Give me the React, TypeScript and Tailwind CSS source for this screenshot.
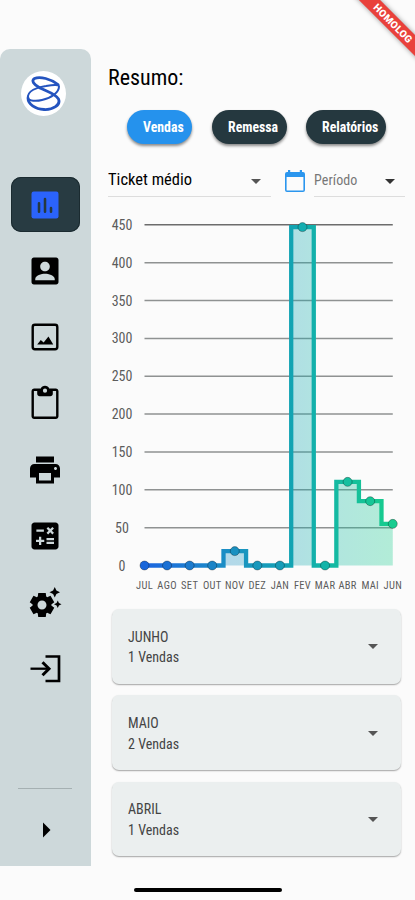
import { useState, type ReactNode } from "react";
import {
  MdArrowDropDown,
  MdArrowRight,
  MdCalculate,
  MdPrint,
  MdSettingsSuggest,
} from "react-icons/md";

const points = [
  { label: "JUL", value: 0 },
  { label: "AGO", value: 0 },
  { label: "SET", value: 0 },
  { label: "OUT", value: 0 },
  { label: "NOV", value: 19 },
  { label: "DEZ", value: 0 },
  { label: "JAN", value: 0 },
  { label: "FEV", value: 447 },
  { label: "MAR", value: 0 },
  { label: "ABR", value: 110.5 },
  { label: "MAI", value: 85 },
  { label: "JUN", value: 55 },
];

const pointColors = [
  "#1a66da", "#1b70d4", "#1b7acd", "#1b84c7", "#1a90c0", "#1998bc",
  "#179cb8", "#14adb0", "#14b3a8", "#15bf9f", "#16c697", "#18cc90",
];

const ticks = [450, 400, 350, 300, 250, 200, 150, 100, 50, 0];

const months = [
  { name: "JUNHO", sales: 1 },
  { name: "MAIO", sales: 2 },
  { name: "ABRIL", sales: 1 },
];

const STEP = 22.57;
const LEFT = 36.5;
const BASE = 355.5;

const toX = (index: number) => LEFT + index * STEP;
const toY = (value: number) => BASE - value * 0.757;

function buildStepPath() {
  let path = `M${toX(0)} ${toY(points[0].value)}`;

  points.slice(1).forEach(({ value }, index) => {
    path += `H${toX(index + 0.5)}V${toY(value)}`;
  });

  return `${path}H${toX(points.length - 1)}`;
}

function Chart() {
  const line = buildStepPath();

  return (
    <svg viewBox="0 0 307 390" className="block h-[390px] w-[307px]">
      <defs>
        <linearGradient
          id="sales"
          gradientUnits="userSpaceOnUse"
          x1={toX(0)}
          x2={toX(11)}
          y1="0"
          y2="0"
        >
          <stop offset="0" stopColor="#1c66e0" />
          <stop offset="0.36" stopColor="#1b92c2" />
          <stop offset="0.6" stopColor="#12a4b2" />
          <stop offset="0.7" stopColor="#13b3a9" />
          <stop offset="1" stopColor="#18cd8c" />
        </linearGradient>
      </defs>
      {ticks.map((tick) => (
        <g key={tick}>
          {tick > 0 && (
            <path
              d={`M${LEFT} ${toY(tick)}H${toX(11)}`}
              stroke={tick === 450 ? "#6c6c6c" : "#8f9292"}
              strokeWidth="1.5"
            />
          )}
          <text
            x="14"
            y={toY(tick) + 5}
            textAnchor="middle"
            fontSize="14"
            fill="#5c5c5c"
          >
            {tick}
          </text>
        </g>
      ))}
      <path
        d={`${line}V${BASE}H${LEFT}Z`}
        fill="url(#sales)"
        fillOpacity="0.32"
      />
      <path d={line} fill="none" stroke="url(#sales)" strokeWidth="4.3" />
      {points.map(({ label, value }, index) => (
        <g key={label}>
          <circle
            cx={toX(index)}
            cy={toY(value)}
            r="4.5"
            fill={pointColors[index]}
            stroke="#000"
            strokeOpacity="0.3"
          />
          <text
            x={toX(index)}
            y="379"
            textAnchor="middle"
            fontSize="10.5"
            letterSpacing="0.3"
            fill="#5c5c5c"
          >
            {label}
          </text>
        </g>
      ))}
    </svg>
  );
}

function Logo() {
  return (
    <div className="grid size-[45px] place-items-center rounded-full bg-white">
      <svg
        viewBox="0 0 36 36"
        className="size-9"
        fill="none"
        stroke="#2454bf"
        strokeLinecap="round"
        strokeLinejoin="round"
      >
        <path
          strokeWidth="2.8"
          d="M33 8.500C26 3 15 0 9.500 2.500C6 4.500 8.500 8.500 15 12C22 15.500 30 17.500 33.500 23C36 29 28 34 19 33.500C10 33 3 28 3 22"
        />
        <path
          strokeWidth="2"
          d="M3 22C2 15 12 11 21 10C27 9 34 8 34 10.500C34 16 27 22 17 24C11 25.500 4 25 3 22"
        />
      </svg>
    </div>
  );
}

function DashboardIcon() {
  return (
    <svg viewBox="0 0 24 24" className="size-9">
      <rect x="3" y="3" width="18" height="18" rx="1.5" fill="#2b63fb" />
      <path
        d="M8 10.800v5.700M12 8v8.500M16 14v2.500"
        stroke="#263940"
        strokeWidth="1.7"
        strokeLinecap="round"
      />
    </svg>
  );
}

function ProfileIcon() {
  return (
    <svg viewBox="0 0 24 24" className="size-9" fill="currentColor">
      <path
        fillRule="evenodd"
        d="M3 4.600v14.800C3 20.300 3.700 21 4.600 21h14.800c.9 0 1.600-.7 1.600-1.600V4.600c0-.9-.7-1.600-1.600-1.600H4.600C3.700 3 3 3.700 3 4.600zM15.200 9c0 1.800-1.400 3.200-3.200 3.200S8.800 10.800 8.800 9s1.400-3.200 3.200-3.200 3.200 1.400 3.200 3.200zM5.500 17.300c0-2.300 4.200-3.500 6.500-3.500s6.500 1.200 6.500 3.500v.9h-13z"
      />
    </svg>
  );
}

function PictureIcon() {
  return (
    <svg viewBox="0 0 24 24" className="size-9">
      <rect
        x="3.800"
        y="3.800"
        width="16.400"
        height="16.400"
        rx="1.500"
        fill="none"
        stroke="currentColor"
        strokeWidth="1.600"
      />
      <path
        d="M6.800 17l2.400-3 1.900 1.700 3.200-4 3.200 5.300z"
        fill="currentColor"
      />
    </svg>
  );
}

function ClipboardIcon() {
  return (
    <svg viewBox="0 0 24 24" className="size-9" fill="currentColor">
      <path
        fillRule="evenodd"
        d="M19.200 2.300h-4.400C14.400 1.200 13.300.5 12 .5s-2.400.7-2.800 1.800H4.800C3.800 2.300 3 3.100 3 4.100v16.700c0 1 .8 1.800 1.800 1.800h14.400c1 0 1.800-.8 1.800-1.800V4.100c0-1-.8-1.800-1.800-1.800zM12 2.400a1.400 1.400 0 1 1 0 2.800 1.400 1.400 0 0 1 0-2.800zM19.400 21H4.600V4h2.200v1.800c0 1 .7 1.700 1.700 1.700h7c1 0 1.700-.7 1.700-1.700V4h2.200z"
      />
    </svg>
  );
}

function ExitIcon() {
  return (
    <svg
      viewBox="0 0 36 36"
      className="size-9"
      fill="none"
      stroke="currentColor"
      strokeWidth="2.700"
    >
      <path d="M18.500 5.500h13.500v24.500H18.500" />
      <path d="M3.500 17.700h18" strokeWidth="2.300" />
      <path d="M15.500 11.200l6.500 6.500-6.500 6.500" strokeWidth="3" />
    </svg>
  );
}

function CalendarIcon() {
  return (
    <svg viewBox="0 0 20 23" className="h-[23px] w-5 shrink-0">
      <path
        fill="#2b96ee"
        fillRule="evenodd"
        d="M18 2h-1V0h-2.200v2H5.200V0H3v2H2a2 2 0 0 0-2 2V20a2 2 0 0 0 2 2h16a2 2 0 0 0 2-2V4a2 2 0 0 0-2-2zM18.400 20.400H1.600V7h16.800z"
      />
    </svg>
  );
}

const menu: { id: string; icon: ReactNode }[] = [
  { id: "dashboard", icon: <DashboardIcon /> },
  { id: "clientes", icon: <ProfileIcon /> },
  { id: "imagens", icon: <PictureIcon /> },
  { id: "pedidos", icon: <ClipboardIcon /> },
  { id: "impressao", icon: <MdPrint className="size-9" /> },
  { id: "calculadora", icon: <MdCalculate className="size-9" /> },
  { id: "ajustes", icon: <MdSettingsSuggest className="size-9" /> },
  { id: "sair", icon: <ExitIcon /> },
];

function Sidebar() {
  const [active, setActive] = useState("dashboard");

  return (
    <aside className="mt-[49px] flex h-[817px] w-[90.500px] shrink-0 flex-col items-center rounded-t-[10px] bg-[#cdd8da] pt-[22px]">
      <div className="pr-1">
        <Logo />
      </div>
      <nav className="mt-[61px] flex flex-col gap-[11.300px]">
        {menu.map(({ id, icon }) => (
          <button
            key={id}
            type="button"
            onClick={() => setActive(id)}
            className={`grid h-[55px] w-[69px] place-items-center rounded-[10px] text-black ${
              active === id ? "bg-[#283b42] ring-1 ring-[#1b2b30] ring-inset" : ""
            }`}
          >
            {icon}
          </button>
        ))}
      </nav>
      <div className="mt-[92px] h-px w-[54px] bg-[#a5b0b2]" />
      <MdArrowRight className="mt-[23px] ml-0.5 size-9 text-black" />
    </aside>
  );
}

function Pill({
  label,
  className,
}: {
  label: string;
  className: string;
}) {
  return (
    <button
      type="button"
      className={`h-[34px] rounded-full pl-4 text-left text-[13.800px] font-bold text-white shadow-[0_2px_3px_rgba(0,0,0,0.45)] ${className}`}
    >
      {label}
    </button>
  );
}

function MonthCard({ name, sales }: { name: string; sales: number }) {
  return (
    <div className="flex h-[74.500px] items-center justify-between rounded-[7px] bg-[#ebefef] px-4 text-[14px] text-[#444] shadow-[0_1px_1.500px_rgba(0,0,0,0.35)]">
      <div className="pt-[2px] leading-[20.500px]">
        <p>{name}</p>
        <p>{sales} Vendas</p>
      </div>
      <MdArrowDropDown className="size-6 text-[#555]" />
    </div>
  );
}

export default function App() {
  return (
    <div className="relative flex h-[900px] w-[415px] overflow-hidden bg-[#fbfbfb] font-['Roboto_Condensed','Roboto',sans-serif] [font-stretch:75%]">
      <Sidebar />
      <main className="flex min-w-0 flex-1 flex-col pt-[63px] pl-[17.500px]">
        <h1 className="text-[22px] leading-[30px] text-black">Resumo:</h1>

        <div className="mt-[17px] flex pl-[19px]">
          <Pill label="Vendas" className="w-[65px] bg-[#2592ed]" />
          <Pill label="Remessa" className="ml-5 w-[75px] bg-[#25383f]" />
          <Pill label="Relatórios" className="ml-[19px] w-[80px] bg-[#25383f]" />
        </div>

        <div className="mt-[21px] flex h-[32px]">
          <div className="flex w-[163px] items-center justify-between border-b border-[#ddd] pr-[3px] text-[16.500px] text-black">
            Ticket médio
            <MdArrowDropDown className="size-6 text-[#555]" />
          </div>
          <div className="mr-[9px] ml-[14px] flex items-center">
            <CalendarIcon />
          </div>
          <div className="flex w-[91px] items-center justify-between border-b border-[#ddd] pr-[3px] text-[#777]">
            <span className="text-[14px] tracking-[0.1px]">Período</span>
            <MdArrowDropDown className="size-6 text-[#333]" />
          </div>
        </div>

        <div className="mt-[13px]">
          <Chart />
        </div>

        <div className="mt-[9px] mr-[14px] ml-1 flex flex-col gap-[11.800px]">
          {months.map((month) => (
            <MonthCard key={month.name} {...month} />
          ))}
        </div>
      </main>

      <div className="absolute top-[16px] left-[333px] h-[15px] w-[120px] rotate-45 bg-[#e9413b] text-center font-['Roboto',sans-serif] text-[10px] leading-[15px] font-black tracking-[0.300px] text-white shadow-[0_0_5px_rgba(0,0,0,0.4)] [font-stretch:100%]">
        HOMOLOG
      </div>
      <div className="absolute top-[888px] left-[134px] h-1 w-[148px] rounded-full bg-black" />
    </div>
  );
}
